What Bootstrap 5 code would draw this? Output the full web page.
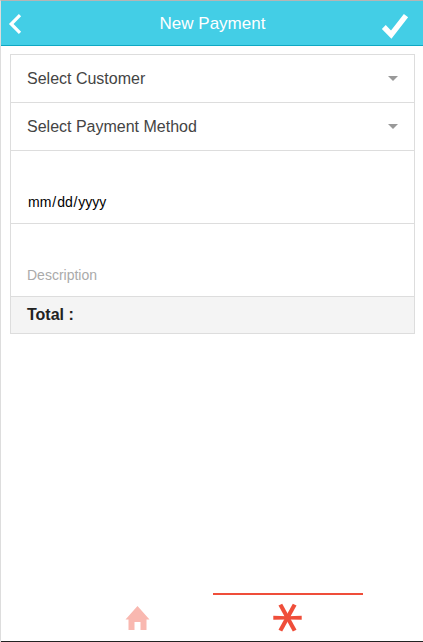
<!DOCTYPE html>
<html lang="en">
<head>
<meta charset="utf-8">
<meta name="viewport" content="width=device-width, initial-scale=1">
<title>New Payment</title>
<link href="https://cdn.jsdelivr.net/npm/bootstrap@5.3.0/dist/css/bootstrap.min.css" rel="stylesheet">
<style>
body { font-family: "Liberation Sans", Arial, sans-serif; color: #444; background: #fff; }
.screen { height: 642px; border-left: 1px solid #ddd; border-top: 1px solid #b5b5b5; }
.topbar { height: 45px; background: #43cee6; border-bottom: 1px solid #0fa8c3; color: #fff; flex: none; }
.topbar h1 { font-size: 17px; line-height: 46px; font-weight: 400; padding-left: 1px; }
.topbar .side { width: 53px; height: 44px; line-height: 0; }
.topbar svg, .tab-link svg, .caret { display: block; }
.form-list { margin: 8px 8px 0 9px; --bs-list-group-border-color: #ddd; --bs-list-group-border-radius: 0; }
.form-list .list-group-item { padding: 0 16px; color: #444; font-size: 16px; }
.row-select { height: 49px; }
.row-select + .row-select { height: 48px; }
.row-input { height: 73px; padding-bottom: 11px !important; }
.date-value, .placeholder-text { font-size: 14px; line-height: 20px; }
.form-list .date-value { color: #000; }
.date-value span { padding: 0 1px; }
.date-value span + span { padding-right: .6px; }
.placeholder-text { color: #aaa; }
.form-list .row-total { height: 37px; background: #f4f4f4; color: #222; }
.tab-link { width: 150px; height: 48px; border-top: 2px solid transparent; }
.tab-link.current { border-top-color: #ef4e3a; }
.bottom-tabs { border-bottom: 1px solid #222; padding-left: 2px; }
</style>
</head>
<body>
<div class="screen d-flex flex-column">
  <header class="topbar d-flex justify-content-between">
    <a class="side" href="#" aria-label="Back"><svg width="53" height="44" viewBox="1 1 53 44"><path d="M20 15.2 11.2 24 20 32.8" fill="none" stroke="#fff" stroke-width="3.2"/></svg></a>
    <h1 class="m-0">New Payment</h1>
    <a class="side" href="#" aria-label="Save"><svg width="53" height="44" viewBox="370 1 53 44"><path d="M383.8 27 391.2 34.6 406 15.6" fill="none" stroke="#fff" stroke-width="5.4"/></svg></a>
  </header>
  <main class="flex-grow-1">
    <div class="list-group form-list">
      <div class="list-group-item row-select d-flex align-items-center justify-content-between"><span>Select Customer</span><svg class="caret" width="10" height="5"><path d="M0 0H10L5 5Z" fill="#999"/></svg></div>
      <div class="list-group-item row-select d-flex align-items-center justify-content-between"><span>Select Payment Method</span><svg class="caret" width="10" height="5"><path d="M0 0H10L5 5Z" fill="#999"/></svg></div>
      <div class="list-group-item row-input d-flex align-items-end"><div class="date-value"><span>mm</span>/<span>dd</span>/<span>yyyy</span></div></div>
      <div class="list-group-item row-input d-flex align-items-end"><span class="placeholder-text">Description</span></div>
      <div class="list-group-item row-total d-flex align-items-center fw-bold">Total :</div>
    </div>
  </main>
  <nav class="bottom-tabs d-flex justify-content-center">
    <a class="tab-link" href="#" aria-label="Home"><svg width="150" height="46" viewBox="63 595 150 46"><path d="M137.5 606 149.5 619.5H146.5V630H140.5V622H134.5V630H128.5V619.5H125.5Z" fill="#f9b8b0"/></svg></a>
    <a class="tab-link current" href="#" aria-label="Payments"><svg width="150" height="46" viewBox="213 595 150 46"><g fill="#ef4e3a"><path d="M273.3 615.8 287.5 616.2 301.7 615.8V619.8L287.5 619.4 273.3 619.8Z"/><path d="M278.5 605.6 282.2 603.8 296.5 629.8 292.8 631.6Z"/><path d="M296.5 605.6 292.8 603.8 278.5 629.8 282.2 631.6Z"/></g></svg></a>
  </nav>
</div>
<script src="https://cdn.jsdelivr.net/npm/bootstrap@5.3.0/dist/js/bootstrap.bundle.min.js"></script>
</body>
</html>
